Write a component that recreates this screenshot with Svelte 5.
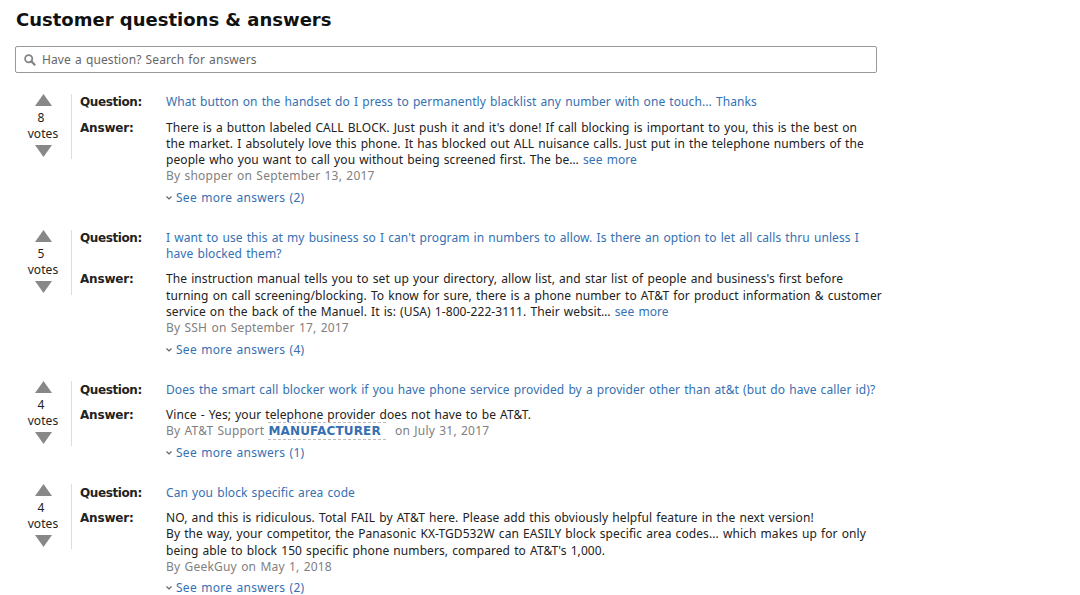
<script lang="ts">
  interface Item {
    votes: number;
    question: string;
    lines: string[];
    seeMore?: boolean;
    author: string;
    badge?: string;
    date: string;
    more: number;
  }

  const items: Item[] = [
    {
      votes: 8,
      question: "What button on the handset do I press to permanently blacklist any number with one touch... Thanks",
      lines: [
        "There is a button labeled CALL BLOCK. Just push it and it's done! If call blocking is important to you, this is the best on",
        "the market. I absolutely love this phone. It has blocked out ALL nuisance calls. Just put in the telephone numbers of the",
        "people who you want to call you without being screened first. The be…",
      ],
      seeMore: true,
      author: "shopper",
      date: "September 13, 2017",
      more: 2,
    },
    {
      votes: 5,
      question: "I want to use this at my business so I can't program in numbers to allow. Is there an option to let all calls thru unless I have blocked them?",
      lines: [
        "The instruction manual tells you to set up your directory, allow list, and star list of people and business's first before",
        "turning on call screening/blocking. To know for sure, there is a phone number to AT&T for product information & customer",
        "service on the back of the Manuel. It is: (USA) 1-800-222-3111. Their websit…",
      ],
      seeMore: true,
      author: "SSH",
      date: "September 17, 2017",
      more: 4,
    },
    {
      votes: 4,
      question: "Does the smart call blocker work if you have phone service provided by a provider other than at&t (but do have caller id)?",
      lines: ["Vince - Yes; your telephone provider does not have to be AT&T."],
      author: "AT&T Support",
      badge: "MANUFACTURER",
      date: "July 31, 2017",
      more: 1,
    },
    {
      votes: 4,
      question: "Can you block specific area code",
      lines: [
        "NO, and this is ridiculous. Total FAIL by AT&T here. Please add this obviously helpful feature in the next version!",
        "By the way, your competitor, the Panasonic KX-TGD532W can EASILY block specific area codes... which makes up for only",
        "being able to block 150 specific phone numbers, compared to AT&T's 1,000.",
      ],
      author: "GeekGuy",
      date: "May 1, 2018",
      more: 2,
    },
  ];

  let search = $state("");
</script>

<main>
  <h1>Customer questions &amp; answers</h1>

  <label class="search">
    <svg viewBox="0 0 12 12" fill="none" stroke="#858585">
      <circle cx="4.7" cy="4.7" r="3.6" stroke-width="1.8" />
      <path d="M7.4 7.4 11.2 11.2" stroke-width="2.2" />
    </svg>
    <input type="text" bind:value={search} placeholder="Have a question? Search for answers" />
  </label>

  {#each items as item}
    <section class="item">
      <div class="votes">
        <button class="arrow" aria-label="Vote up">
          <svg viewBox="0 0 17 12"><path d="M8.5 0 17 12H0z" /></svg>
        </button>
        <span class="count">{item.votes}</span>
        <span>votes</span>
        <button class="arrow down" aria-label="Vote down">
          <svg viewBox="0 0 17 12"><path d="M0 0H17L8.5 12z" /></svg>
        </button>
      </div>
      <div class="content">
        <strong class="question-label">Question:</strong>
        <a class="question" href="#question">{item.question}</a>
        <strong>Answer:</strong>
        <div class="answer">
          {#each item.lines as line, i}
            <div class="line">
              {line}
              {#if item.seeMore && i === item.lines.length - 1}<a href="#more">see more</a>{/if}
            </div>
          {/each}
          <div class="byline">
            By {item.author}
            {#if item.badge}<a class="badge" href="#badge">{item.badge}</a>{/if}
            on {item.date}
          </div>
          <a class="more" href="#answers">
            <svg viewBox="0 0 6 4"><path d="M.5.6 3 2.9 5.5.6" /></svg>See more answers ({item.more})
          </a>
        </div>
      </div>
    </section>
  {/each}
</main>

<style>
  :global(body) {
    background: #fff;
  }

  main {
    box-sizing: border-box;
    height: 595px;
    overflow: hidden;
    padding: 8px 15px 0;
    font-family: Verdana, "Noto Sans", sans-serif;
    font-size: 12px;
    line-height: 16.3px;
    letter-spacing: 0.08px;
    word-spacing: 0.9px;
    color: #222;
  }

  h1 {
    margin: 0 0 15px;
    padding: 1px 0 0 1px;
    font-family: Verdana, "DejaVu Sans", sans-serif;
    font-size: 18px;
    line-height: 22px;
    letter-spacing: 0;
    word-spacing: 0;
    color: #111;
  }

  a {
    color: #3570b2;
    text-decoration: none;
  }

  strong {
    font-family: Verdana, "DejaVu Sans", sans-serif;
    letter-spacing: -0.19px;
  }

  .search {
    display: flex;
    align-items: center;
    gap: 6px;
    box-sizing: border-box;
    width: 862px;
    height: 27px;
    margin-bottom: 21px;
    padding: 0 8px;
    border: 1px solid #999;
    border-radius: 2px;
  }

  .search svg {
    width: 12px;
    height: 12px;
  }

  .search input {
    flex: 1;
    padding: 1px 0 0;
    border: 0;
    outline: none;
    font: inherit;
    letter-spacing: 0.1px;
    word-spacing: inherit;
  }

  .search input::placeholder {
    color: #666;
  }

  .item {
    display: flex;
    align-items: flex-start;
    margin-bottom: 23.8px;
  }

  .votes {
    display: flex;
    flex-direction: column;
    align-items: center;
    box-sizing: border-box;
    width: 57px;
    height: 65px;
    border-right: 1px solid #ddd;
  }

  .arrow {
    display: block;
    height: 12px;
    padding: 0;
    border: 0;
    background: none;
  }

  .arrow.down {
    margin-top: 3px;
  }

  .arrow svg {
    display: block;
    width: 17px;
    height: 12px;
    fill: #888;
  }

  .count {
    margin-top: 4px;
    padding-right: 4px;
  }

  .votes span {
    flex-shrink: 0;
    height: 16px;
  }

  .content {
    display: grid;
    grid-template-columns: 86px 716px;
    row-gap: 9px;
    padding: 0.3px 0 0 8px;
    margin-bottom: -0.3px;
  }

  .question-label {
    letter-spacing: -0.4px;
  }

  .line,
  .byline {
    white-space: nowrap;
  }

  .byline {
    color: #808080;
    letter-spacing: 0.2px;
  }

  .badge {
    margin: 0 5px 0 -1px;
    padding: 1px 5px 1px 1px;
    border: 1px dashed #bbb;
    border-width: 1px 0;
    font-family: Verdana, "DejaVu Sans", sans-serif;
    font-weight: bold;
    letter-spacing: 0.15px;
  }

  .more {
    display: flex;
    align-items: center;
    gap: 4px;
    margin-top: 5px;
    letter-spacing: 0.27px;
  }

  .more svg {
    width: 6px;
    height: 4px;
    fill: none;
    stroke: #666;
    stroke-width: 1.3;
  }
</style>
